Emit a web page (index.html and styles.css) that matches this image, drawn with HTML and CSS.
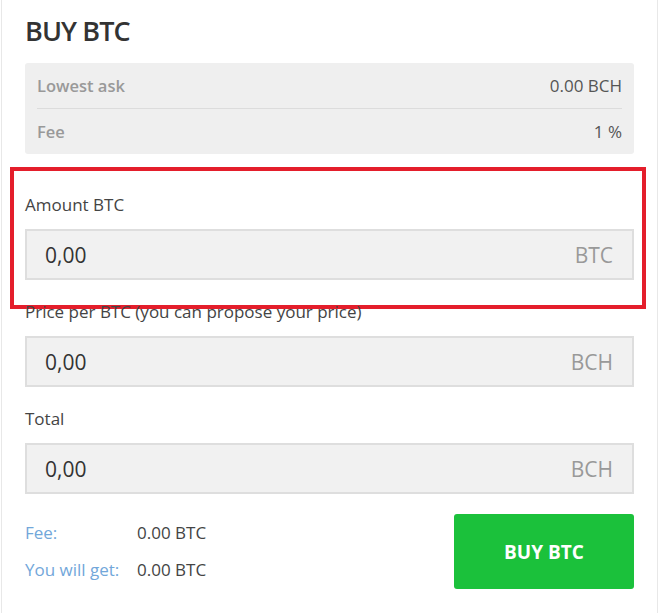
FILE: index.html
```html
<!DOCTYPE html>
<html lang="en">
<head>
    <meta charset="UTF-8">
    <meta name="viewport" content="width=device-width, initial-scale=1.0">
    <title>Buy BTC</title>
    <link rel="stylesheet" href="styles.css">
</head>
<body>
    <div class="card">
        <h1>BUY BTC</h1>
        <div class="summary">
            <div class="summary-row">
                <span class="summary-label">Lowest ask</span>
                <span class="summary-value">0.00 BCH</span>
            </div>
            <div class="summary-row">
                <span class="summary-label">Fee</span>
                <span class="summary-value">1 %</span>
            </div>
        </div>

        <div class="field field-first">
            <label for="amount">Amount BTC</label>
            <div class="input-box">
                <input id="amount" type="text" value="0,00">
                <span class="unit">BTC</span>
            </div>
            <div class="highlight"></div>
        </div>

        <div class="field">
            <label for="price">Price per BTC (you can propose your price)</label>
            <div class="input-box">
                <input id="price" type="text" value="0,00">
                <span class="unit">BCH</span>
            </div>
        </div>

        <div class="field">
            <label for="total">Total</label>
            <div class="input-box">
                <input id="total" type="text" value="0,00">
                <span class="unit">BCH</span>
            </div>
        </div>

        <div class="footer">
            <div class="totals">
                <div class="totals-row">
                    <span class="totals-label">Fee:</span>
                    <span class="totals-value">0.00 BTC</span>
                </div>
                <div class="totals-row">
                    <span class="totals-label">You will get:</span>
                    <span class="totals-value">0.00 BTC</span>
                </div>
            </div>
            <button class="buy-button">BUY BTC</button>
        </div>
    </div>
</body>
</html>
```

FILE: styles.css
```css
body {
    margin: 0;
    padding-left: 1px;
    font-family: "Open Sans", "Noto Sans", Arial, sans-serif;
    color: #444;
    background: #fff;
}
.card {
    border-left: 1px solid #e8e8e8;
    border-right: 1px solid #e8e8e8;
    padding: 13px 23px 24px;
    min-height: 576px;
}
h1 {
    margin: 0 0 14px;
    font-size: 27px;
    line-height: 36px;
    font-weight: 600;
    color: #333;
    letter-spacing: -0.9px;
}
.summary {
    background-color: #efefef;
    border-radius: 3px;
    padding: 0 12px;
}
.summary-row {
    display: flex;
    justify-content: space-between;
    align-items: center;
    height: 45px;
}
.summary-row + .summary-row {
    border-top: 1px solid #dcdcdc;
}
.summary-label {
    font-size: 16.5px;
    color: #999;
    font-weight: 600;
}
.summary-value {
    font-size: 17px;
    color: #555;
}
.field {
    position: relative;
    margin-top: 21px;
}
.field-first {
    margin-top: 40px;
}
.field label {
    display: block;
    font-size: 17px;
    line-height: 22px;
    margin-bottom: 13px;
    color: #444;
}
.input-box {
    display: flex;
    align-items: center;
    height: 51px;
    box-sizing: border-box;
    background-color: #f1f1f1;
    border: 2px solid #dedede;
    padding: 0 19px 0 18px;
}
.input-box input {
    flex: 1;
    min-width: 0;
    border: none;
    background: transparent;
    padding: 0;
    font-family: inherit;
    font-size: 21px;
    color: #333;
    outline: none;
}
.unit {
    font-size: 21px;
    color: #999;
}
.highlight {
    position: absolute;
    top: -27px;
    bottom: -29px;
    left: -15px;
    right: -12px;
    border: 4px solid #e41e2b;
    pointer-events: none;
}
.footer {
    display: flex;
    justify-content: space-between;
    align-items: center;
    margin-top: 20px;
}
.totals {
    display: flex;
    flex-direction: column;
    gap: 15px;
}
.totals-row {
    display: flex;
    font-size: 17px;
    line-height: 22px;
}
.totals-label {
    width: 112px;
    color: #72a7da;
}
.totals-value {
    color: #444;
}
.buy-button {
    width: 180px;
    height: 75px;
    border: none;
    border-radius: 3px;
    background-color: #1bc13b;
    color: #fff;
    font-family: inherit;
    font-size: 19px;
    font-weight: 700;
    cursor: pointer;
}
```
